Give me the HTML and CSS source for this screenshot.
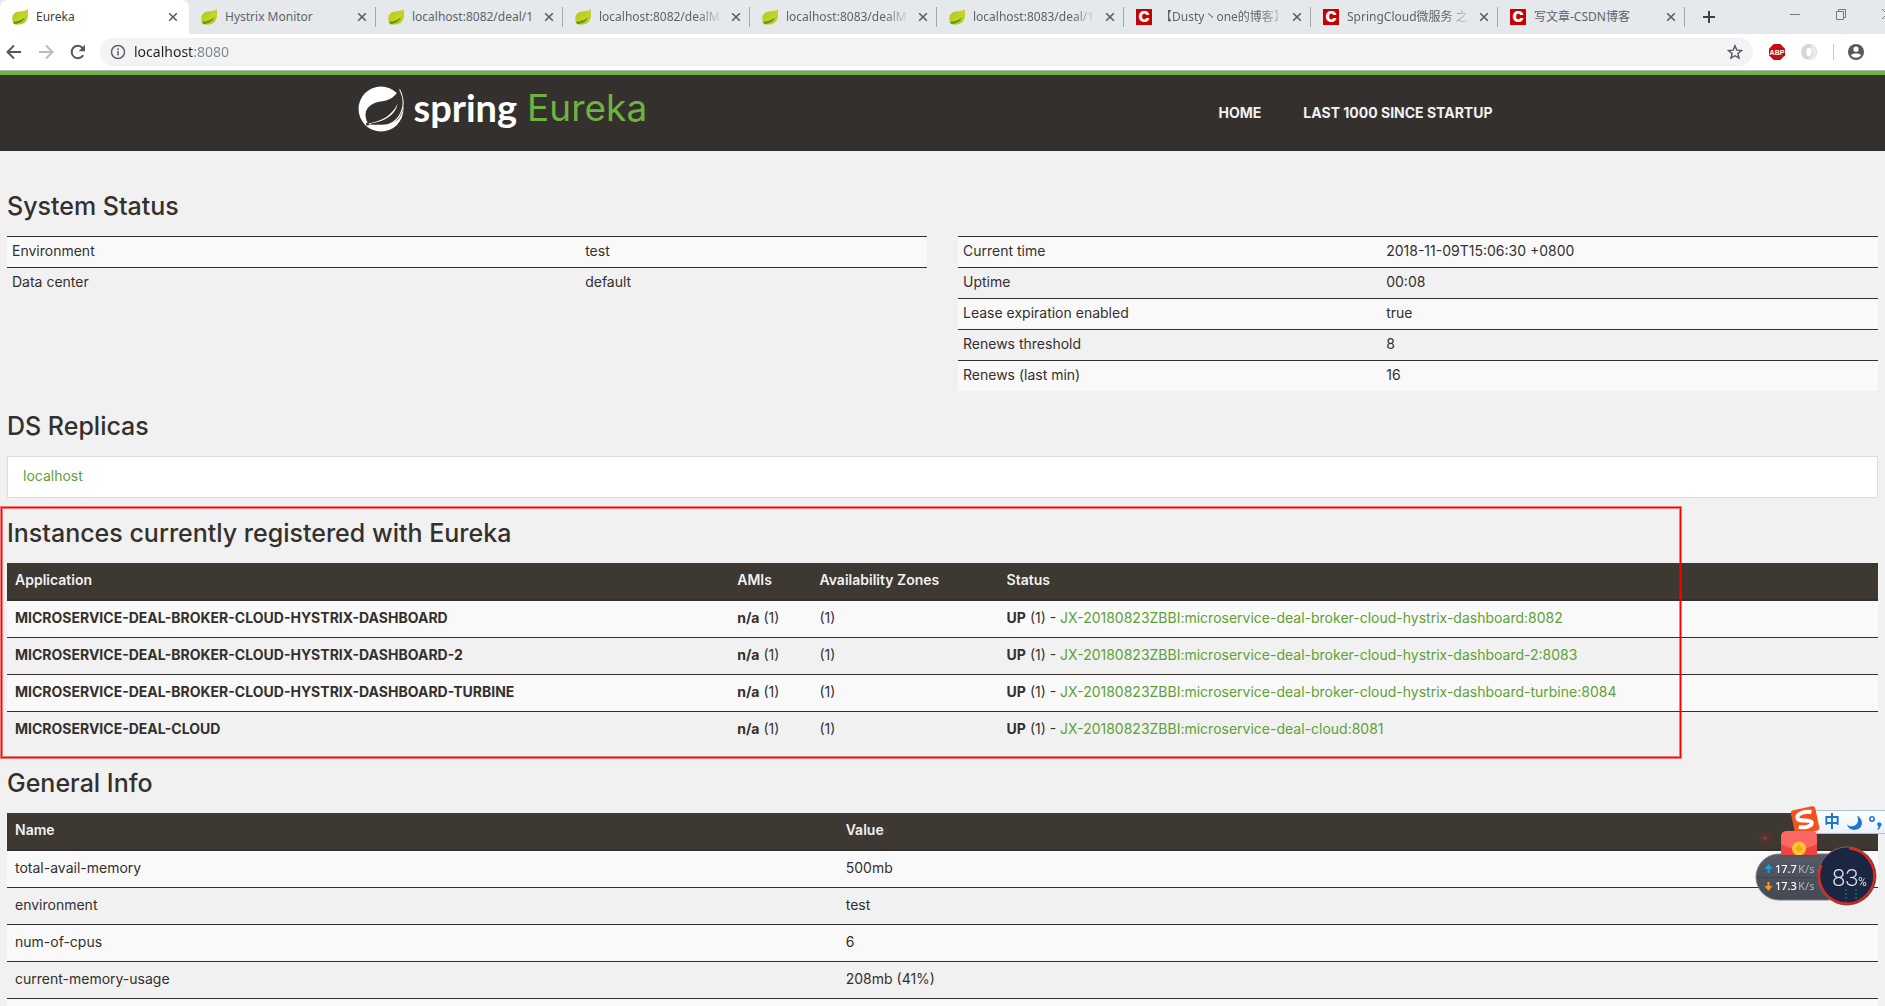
FILE: index.html
```html
<!DOCTYPE html>
<html lang="en">
<head>
<meta charset="utf-8">
<title>Eureka</title>
<link rel="stylesheet" href="styles.css">
</head>
<body>
<svg class="defs" aria-hidden="true">
  <defs>
    <linearGradient id="leaf-fill" x1="0" y1="0" x2="1" y2="1"><stop offset="0" stop-color="#a8c90f"/><stop offset="0.6" stop-color="#c9d32b"/><stop offset="1" stop-color="#9cc21a"/></linearGradient>
    <symbol id="leaf" viewBox="0 0 16 16">
      <path d="M15.500 0C14 2 11 2 7 2.400 2.500 3 .3 6 .3 9.500c0 2.500.7 4.800 2.200 6 4.500 1 10-.3 12-4C16.500 8 16.500 3.500 15.500 0z" fill="url(#leaf-fill)"/>
      <path d="M.8 12.800C4 12.300 9 12 12.800 8.200 11.500 12.500 7.500 15 2.200 15z" fill="#5d9a1e"/>
    </symbol>
    <symbol id="cross" viewBox="0 0 10 10"><path d="M1.200 1.200l7.600 7.600M8.800 1.200L1.200 8.800" stroke="#5a5d61" stroke-width="1.600" fill="none"/></symbol>
  </defs>
</svg>

<div class="browser">
  <div class="tab-strip">
    <div class="tab tab-active"><svg class="favicon"><use href="#leaf"/></svg><button class="tab-title">Eureka</button><button class="tab-close" aria-label="Close tab"><svg><use href="#cross"/></svg></button></div>
    <div class="tab"><svg class="favicon"><use href="#leaf"/></svg><button class="tab-title">Hystrix Monitor</button><button class="tab-close" aria-label="Close tab"><svg><use href="#cross"/></svg></button></div>
    <div class="tab"><svg class="favicon"><use href="#leaf"/></svg><button class="tab-title">localhost:8082/deal/1</button><button class="tab-close" aria-label="Close tab"><svg><use href="#cross"/></svg></button></div>
    <div class="tab"><svg class="favicon"><use href="#leaf"/></svg><button class="tab-title tab-fade">localhost:8082/dealM</button><button class="tab-close" aria-label="Close tab"><svg><use href="#cross"/></svg></button></div>
    <div class="tab"><svg class="favicon"><use href="#leaf"/></svg><button class="tab-title tab-fade">localhost:8083/dealM</button><button class="tab-close" aria-label="Close tab"><svg><use href="#cross"/></svg></button></div>
    <div class="tab"><svg class="favicon"><use href="#leaf"/></svg><button class="tab-title tab-fade">localhost:8083/deal/1</button><button class="tab-close" aria-label="Close tab"><svg><use href="#cross"/></svg></button></div>
    <div class="tab"><span class="favicon csdn">C</span><button class="tab-title tab-fade">【Dusty丶one的博客】</button><button class="tab-close" aria-label="Close tab"><svg><use href="#cross"/></svg></button></div>
    <div class="tab"><span class="favicon csdn">C</span><button class="tab-title tab-fade">SpringCloud微服务 之</button><button class="tab-close" aria-label="Close tab"><svg><use href="#cross"/></svg></button></div>
    <div class="tab"><span class="favicon csdn">C</span><button class="tab-title">写文章-CSDN博客</button><button class="tab-close" aria-label="Close tab"><svg><use href="#cross"/></svg></button></div>
    <button class="new-tab" aria-label="New tab"><svg viewBox="0 0 12 12"><path d="M6 0v12M0 6h12" stroke="#3c4043" stroke-width="2"/></svg></button>
    <div class="window-buttons">
      <button aria-label="Minimize"><svg viewBox="0 0 12 12"><path d="M1 6.500h10" stroke="#777" fill="none"/></svg></button>
      <button aria-label="Restore"><svg viewBox="0 0 12 12"><path d="M1.500 3.500h7v8h-7zM3.500 3.500v-2h7v8h-2" stroke="#777" fill="none"/></svg></button>
      <button aria-label="Close"><svg viewBox="0 0 12 12"><path d="M1 1l10 10M11 1L1 11" stroke="#777" fill="none"/></svg></button>
    </div>
  </div>

  <div class="toolbar">
    <button class="tool" aria-label="Back"><svg viewBox="0 0 16 16"><path d="M15 8H2M8 1.500L1.500 8 8 14.500" stroke="#55585c" stroke-width="2" fill="none"/></svg></button>
    <button class="tool" aria-label="Forward"><svg viewBox="0 0 16 16"><path d="M1 8h13M8 1.500L14.500 8 8 14.500" stroke="#b9bbbd" stroke-width="2" fill="none"/></svg></button>
    <button class="tool" aria-label="Reload"><svg viewBox="0 0 16 16"><path d="M13.200 11.200A6.200 6.200 0 1 1 12.600 4" stroke="#55585c" stroke-width="2" fill="none"/><path d="M15 .8v6.400H8.600z" fill="#55585c"/></svg></button>
    <div class="address">
      <svg class="info" viewBox="0 0 16 16"><circle cx="8" cy="8" r="6.500" stroke="#5f6368" stroke-width="1.500" fill="none"/><path d="M8 7v4.500M8 4.300v1.700" stroke="#5f6368" stroke-width="1.600"/></svg>
      <input class="url" type="text" value="localhost:8080" aria-label="Address">
      <button class="star" aria-label="Bookmark"><svg viewBox="0 0 16 16"><path d="M8 1.800l1.800 4.300 4.700.4-3.600 3 1.100 4.600L8 11.700l-4 2.400 1.100-4.600-3.600-3 4.700-.4z" fill="none" stroke="#55585c" stroke-width="1.400"/></svg></button>
    </div>
    <div class="extensions">
      <button class="tool" aria-label="Adblock Plus"><svg viewBox="0 0 16 16"><path d="M4.700 0h6.600L16 4.700v6.600L11.300 16H4.700L0 11.300V4.700z" fill="#c70d0d"/><text x="8" y="10.500" class="abp">ABP</text></svg></button>
      <button class="tool" aria-label="JSON viewer"><svg viewBox="0 0 16 16"><circle cx="8" cy="8" r="8" fill="#d6d6d6"/><path d="M11 .6A8 8 0 0 1 5 15.400C10 14 12.500 11 11.500 8S9 3 11 .6z" fill="#ececec"/><ellipse cx="8" cy="8" rx="2.600" ry="4.200" fill="#fff"/></svg></button>
      <span class="divider"></span>
      <button class="tool" aria-label="Profile"><svg viewBox="0 0 16 16"><circle cx="8" cy="8" r="8" fill="#55585c"/><circle cx="8" cy="5.200" r="2.600" fill="#fff"/><path d="M3 11.300C3.500 9 12.500 9 13 11.300 11.500 14.500 4.500 14.500 3 11.300z" fill="#fff"/></svg></button>
    </div>
  </div>
</div>

<header class="navbar">
  <div class="navbar-inner">
    <a class="brand" href="#">
      <svg class="brand-mark" viewBox="0 0 46 46">
        <circle cx="23" cy="23" r="22.500" fill="#fff"/>
        <path d="M41.500 2C39 9 34 13.500 26 15 16 16 7.500 20 7.500 29c0 4 1.500 7 3.500 9.500C23 39 36 40 42 31c3-5 4-10 3.500-15C45 10 43.500 6 41.500 2z" fill="#34302d"/>
        <path d="M39.800 17.500C37 30 25 36 13.500 37.200 11.800 38.200 10.500 38.500 10 37.500 23 35.500 34 30 39.800 17.500z" fill="#fff"/>
        <path d="M41.300 3c4 7 5 16 2 23-2.500 6-6 10-12 12" fill="none" stroke="#fff" stroke-width="1.200"/>
        <path d="M41.300 3C40 7 38 9.500 35 11.500" fill="none" stroke="#34302d" stroke-width="1"/>
        <circle cx="9.500" cy="38" r="1.500" fill="#34302d"/>
      </svg>
      <span class="brand-spring">spring</span>
      <span class="brand-eureka">Eureka</span>
    </a>
    <nav class="nav-links"><a href="#">HOME</a><a href="#">LAST 1000 SINCE STARTUP</a></nav>
  </div>
</header>

<main class="content">
  <h1>System Status</h1>
  <div class="status-grid">
    <table class="table compact">
      <colgroup><col class="col-env"><col></colgroup>
      <tbody>
        <tr><td>Environment</td><td>test</td></tr>
        <tr><td>Data center</td><td>default</td></tr>
      </tbody>
    </table>
    <table class="table compact">
      <colgroup><col class="col-time"><col></colgroup>
      <tbody>
        <tr><td>Current time</td><td>2018-11-09T15:06:30 +0800</td></tr>
        <tr><td>Uptime</td><td>00:08</td></tr>
        <tr><td>Lease expiration enabled</td><td>true</td></tr>
        <tr><td>Renews threshold</td><td>8</td></tr>
        <tr><td>Renews (last min)</td><td>16</td></tr>
      </tbody>
    </table>
  </div>

  <h1>DS Replicas</h1>
  <ul class="replicas"><li><a href="#">localhost</a></li></ul>

  <section class="instances">
    <h1>Instances currently registered with Eureka</h1>
    <table class="table">
      <colgroup><col class="col-app"><col class="col-ami"><col class="col-zone"><col></colgroup>
      <thead><tr><th>Application</th><th>AMIs</th><th>Availability Zones</th><th>Status</th></tr></thead>
      <tbody>
        <tr><td><b>MICROSERVICE-DEAL-BROKER-CLOUD-HYSTRIX-DASHBOARD</b></td><td><b>n/a</b> (1)</td><td>(1)</td><td><b>UP</b> (1) - <a href="#">JX-20180823ZBBI:microservice-deal-broker-cloud-hystrix-dashboard:8082</a></td></tr>
        <tr><td><b>MICROSERVICE-DEAL-BROKER-CLOUD-HYSTRIX-DASHBOARD-2</b></td><td><b>n/a</b> (1)</td><td>(1)</td><td><b>UP</b> (1) - <a href="#">JX-20180823ZBBI:microservice-deal-broker-cloud-hystrix-dashboard-2:8083</a></td></tr>
        <tr><td><b>MICROSERVICE-DEAL-BROKER-CLOUD-HYSTRIX-DASHBOARD-TURBINE</b></td><td><b>n/a</b> (1)</td><td>(1)</td><td><b>UP</b> (1) - <a href="#">JX-20180823ZBBI:microservice-deal-broker-cloud-hystrix-dashboard-turbine:8084</a></td></tr>
        <tr><td><b>MICROSERVICE-DEAL-CLOUD</b></td><td><b>n/a</b> (1)</td><td>(1)</td><td><b>UP</b> (1) - <a href="#">JX-20180823ZBBI:microservice-deal-cloud:8081</a></td></tr>
      </tbody>
    </table>
    <div class="highlight"></div>
  </section>

  <h1>General Info</h1>
  <table class="table">
    <colgroup><col class="col-name"><col></colgroup>
    <thead><tr><th>Name</th><th>Value</th></tr></thead>
    <tbody>
      <tr><td>total-avail-memory</td><td>500mb</td></tr>
      <tr><td>environment</td><td>test</td></tr>
      <tr><td>num-of-cpus</td><td>6</td></tr>
      <tr><td>current-memory-usage</td><td>208mb (41%)</td></tr>
      <tr><td></td><td></td></tr>
    </tbody>
  </table>
</main>

<svg class="desktop-widget" viewBox="0 0 135 110" role="img" aria-label="Input method and network monitor">
  <defs>
    <linearGradient id="pill" x1="0" y1="0" x2="0" y2="1"><stop offset="0" stop-color="#555b66"/><stop offset="1" stop-color="#444953"/></linearGradient>
    <linearGradient id="bar" x1="0" y1="0" x2="0" y2="1"><stop offset="0" stop-color="#fff"/><stop offset="1" stop-color="#e9f1f7"/></linearGradient>
  </defs>
  <rect x="60" y="5.500" width="90" height="23" fill="url(#bar)" stroke="#a9c6d8"/>
  <g transform="rotate(-12 55 15)"><rect x="42.500" y="3" width="25" height="25" rx="3" fill="#f4511e"/><path d="M63 8.500C57 6 48 7 48 11.500c0 5 13 3 13 7.500 0 3.500-8 4-13.500 1.500" fill="none" stroke="#fff" stroke-width="4"/></g>
  <text x="82" y="22" class="ime">中</text>
  <path d="M107 10.500c4 8-4 14-10 9 2 7 12 7 14.500 1 1.500-4-1-8-4.500-10z" fill="#1c76cf"/>
  <circle cx="122" cy="14" r="2.200" fill="none" stroke="#1c76cf" stroke-width="1.500"/>
  <path d="M127 19a2.300 2.300 0 1 1 3.500 2.500c-.5 2-1.500 3-3 3.500l-.3-1c1-.5 1.300-1.200 1.300-2z" fill="#1c76cf"/>
  <rect x="9" y="28" width="14" height="10" rx="2" fill="#523330"/><circle cx="15" cy="33" r="2" fill="#70472f"/>
  <path d="M29 49h49c12 0 12 46 0 46H29a23 23 0 0 1 0-46z" fill="url(#pill)" stroke="#777c84"/>
  <path d="M7 72.500h62" stroke="#3f444d"/>
  <path d="M31 50V32q0-6 6-6h24q6 0 6 6v18z" fill="#ee4540"/>
  <path d="M31 39V32q0-6 6-6h24q6 0 6 6v7q-18 10-36 0z" fill="#fb6763"/>
  <circle cx="49" cy="43.500" r="7" fill="#ffc72b"/><path d="M49 39.500l4 4-4 4-4-4z" fill="#f5a81c"/>
  <rect x="31" y="50" width="36" height="2" fill="#4d525d"/>
  <path d="M18.500 68v-6" stroke="#18a0ee" stroke-width="2"/><path d="M14.500 64l4-5 4 5z" fill="#18a0ee"/>
  <path d="M18.500 77v6" stroke="#f79a12" stroke-width="2"/><path d="M14.500 81l4 5 4-5z" fill="#f79a12"/>
  <text x="25" y="68" class="rate">17.7<tspan class="unit" x="48">K/s</tspan></text>
  <text x="25" y="85" class="rate">17.3<tspan class="unit" x="48">K/s</tspan></text>
  <circle cx="97" cy="71" r="29.500" fill="#8a5c5c"/><circle cx="97" cy="71" r="28.500" fill="#1b2642"/>
  <path d="M99 43.500A27.500 27.500 0 1 1 71.500 60" fill="none" stroke="#f22613" stroke-width="2"/>
  <path d="M96 84v13M106 84v13" stroke="#12616d" stroke-width="2" stroke-dasharray="2 2"/>
  <text x="82" y="81" class="percent">83<tspan class="percent-sign" x="108">%</tspan></text>
</svg>
</body>
</html>
```
FILE: styles.css
```css
* { box-sizing: border-box; }

body {
  margin: 0;
  height: 100vh;
  overflow: hidden;
  background: #f1f1f1;
  color: #34302d;
  font: 14px/20px Inter, "Noto Sans CJK SC", sans-serif;
}

button {
  border: 0;
  padding: 0;
  background: none;
  font: inherit;
  color: inherit;
}

a { color: #5fa134; text-decoration: none; }

.defs { position: absolute; width: 0; height: 0; }

/* Browser frame */
.browser {
  background: #fff;
  border-bottom: 1px solid #b6b4b6;
  font-family: "Noto Sans", "Noto Sans CJK SC", sans-serif;
}

.tab-strip {
  display: flex;
  height: 34px;
  overflow: hidden;
  background: #e5e9ec;
}

.tab {
  display: flex;
  align-items: center;
  flex: 0 1 187px;
  min-width: 0;
  padding: 0 9px 0 12px;
  position: relative;
  color: #5f6368;
  font-size: 12px;
}

.tab:not(.tab-active)::after {
  content: "";
  position: absolute;
  right: 0;
  top: 7px;
  width: 1px;
  height: 20px;
  background: #a6a9ac;
}

.tab-active {
  flex-basis: 189px;
  padding-right: 11px;
  background: #fff;
  border-radius: 8px 8px 0 0;
  color: #3c4043;
}

.favicon { flex: none; width: 16px; height: 16px; margin-right: 8px; }

.csdn {
  background: #c90000;
  color: #fff;
  font: 900 15px/16px Inter, sans-serif;
  text-align: center;
}

.tab-title {
  flex: 1;
  min-width: 0;
  overflow: hidden;
  white-space: nowrap;
  text-align: left;
  line-height: 20px;
}

.tab-fade {
  -webkit-mask-image: linear-gradient(to right, #000 80%, transparent);
  mask-image: linear-gradient(to right, #000 80%, transparent);
}

.tab-close { flex: none; width: 10px; height: 10px; margin: 0 0 0 8px; }
.tab-close svg { display: block; width: 10px; height: 10px; }

.new-tab { flex: none; width: 12px; margin-left: 18px; }
.new-tab svg { display: block; width: 12px; height: 12px; }

.window-buttons {
  display: flex;
  gap: 34px;
  flex: none;
  margin: 8px -8px 0 auto;
}
.window-buttons svg { display: block; width: 12px; height: 12px; }
.window-buttons button { height: 12px; }

.toolbar {
  display: flex;
  align-items: center;
  gap: 16px;
  padding: 4px 21px 4px 6px;
}

.tool { flex: none; width: 16px; height: 16px; }
.tool svg { display: block; width: 16px; height: 16px; }

.abp { fill: #fff; font: 700 7px "Liberation Sans", sans-serif; text-anchor: middle; }

.address {
  display: flex;
  align-items: center;
  flex: 1;
  height: 28px;
  margin-left: -2px;
  padding: 0 10px;
  border-radius: 14px;
  background: #f1f3f4;
}

.info { flex: none; width: 16px; height: 16px; }

.url {
  flex: 1;
  min-width: 0;
  margin-left: 8px;
  padding: 0;
  border: 0;
  outline: 0;
  font: 14px/20px "Noto Sans", sans-serif;
  color: transparent;
  background: linear-gradient(to right, #202124 60px, #80868b 60px);
  -webkit-background-clip: text;
  background-clip: text;
}

.star svg { display: block; width: 16px; height: 16px; }

.extensions { display: flex; align-items: center; gap: 16px; }
.divider { width: 1px; height: 16px; margin-right: -2px; background: #c8cacc; }

/* Page header */
.navbar { background: #34302d; border-top: 4px solid #6db33f; }

.navbar-inner {
  display: flex;
  align-items: center;
  justify-content: space-between;
  max-width: 1170px;
  height: 76px;
  margin: 0 auto;
  padding-right: 15px;
}

.brand { display: flex; align-items: center; padding-bottom: 8px; line-height: 44px; }
.brand-mark { width: 46px; height: 46px; margin-right: 10px; }
.brand-spring { padding-bottom: 4px; color: #fff; font-family: Lato, sans-serif; font-size: 38px; font-weight: 700; }
.brand-eureka { margin-left: 10px; padding-bottom: 3px; color: #6db33f; font-size: 37px; }

.nav-links { display: flex; gap: 2px; }
.nav-links a { padding: 0 20px; color: #f1f1f1; font-weight: 700; }

/* Page content */
.content { padding: 20px 7px 0; }

h1 { margin: 20px 0 15px; font-size: 25px; line-height: 30px; font-weight: 500; }

.status-grid { display: grid; grid-template-columns: 1fr 1fr; gap: 31px; align-items: start; }

.table { width: 100%; table-layout: fixed; border-spacing: 0; }
.table td, .table th { padding: 7px 8px 9px; text-align: left; height: 37px; }
.table td { border-top: 1px solid #34302d; }
.table thead + tbody tr:first-child td { border-top: 0; height: 36px; }
.table tbody tr:nth-child(odd) { background: #f9f9f9; }
.table th { height: 38px; background: #3d3832; color: #f1f1f1; border-bottom: 2px solid #34302d; font-weight: 600; }
.table.compact td { height: 31px; padding: 4px 5px 6px; }

.col-env { width: 62.3%; }
.col-time { width: 46%; }
.col-app { width: 38.6%; }
.col-ami { width: 4.4%; }
.col-zone { width: 10%; }
.col-name { width: 44.4%; }

.replicas {
  margin: 0;
  padding: 9px 15px 11px;
  list-style: none;
  background: #fff;
  border: 1px solid #ddd;
}

.instances { position: relative; }

/* Marker frame drawn over the instances section */
.highlight {
  position: absolute;
  top: -11px;
  right: 197px;
  bottom: -10px;
  left: -6px;
  border: 1px solid #f00;
  box-shadow: 0 0 0 1px rgba(255, 0, 0, 0.5), inset 0 0 0 1px rgba(255, 0, 0, 0.5);
  pointer-events: none;
}

/* Floating desktop widget */
.desktop-widget { position: fixed; right: 0; top: 805px; width: 135px; height: 110px; }
.ime { fill: #1c76cf; font: 700 16px "Noto Sans CJK SC", sans-serif; text-anchor: middle; }
.rate { fill: #fff; font: 500 11px "Noto Sans", sans-serif; }
.unit { fill: #a5a9b0; }
.percent { fill: #d9dce6; font: 300 24px Roboto, sans-serif; }
.percent-sign { font-size: 12px; font-weight: 400; }
```
